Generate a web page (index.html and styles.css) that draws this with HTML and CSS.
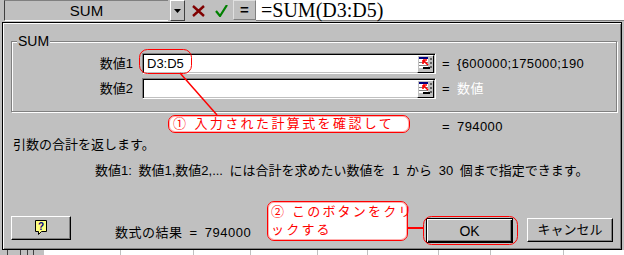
FILE: index.html
```html
<!DOCTYPE html>
<html lang="ja">
<head>
  <meta charset="UTF-8" />
  <title>SUM - 関数の引数</title>
  <link rel="stylesheet" href="styles.css">
</head>
<body>
  <!-- Formula bar -->
  <div class="toolbar">
    <div class="name-box">SUM</div>
    <div class="drop-btn">
      <svg width="7" height="4" viewBox="0 0 7 4"><path d="M0 0h7L3.5 4z" fill="#000"/></svg>
    </div>
    <div class="tool-icon cancel">
      <svg width="13" height="12" viewBox="0 0 13 12"><path d="M1 1l11 10M12 1L1 11" stroke="#800000" stroke-width="2.4"/></svg>
    </div>
    <div class="tool-icon enter">
      <svg width="13" height="12" viewBox="0 0 13 12"><path d="M1 6l4 5L12 0" stroke="#008000" stroke-width="2.2" fill="none"/></svg>
    </div>
    <div class="equal-btn">=</div>
    <div class="formula">=SUM(D3:D5)</div>
  </div>

  <!-- Function arguments dialog -->
  <div class="dialog">
    <div class="group">
      <div class="group-title">SUM</div>
      <div class="arg-grid">
        <label class="arg-label">数値1</label>
        <div class="arg-input">
          <span class="arg-text">D3:D5</span>
          <span class="ref-btn">
            <svg width="15" height="15" viewBox="0 0 15 15">
              <rect x="1" y="1" width="9" height="2" fill="#000080"/>
              <rect x="1" y="3" width="9" height="9" fill="#fff"/>
              <path d="M1 6.5h9M1 9.5h9" stroke="#808080"/>
              <path d="M5 4l5 5M5 4v4M5 4h4" stroke="#f00" stroke-width="1.6" fill="none"/>
              <rect x="5" y="11" width="7" height="2" fill="#000"/>
              <path d="M13 2v2M13 6v2M13 10v2" stroke="#000"/>
            </svg>
          </span>
        </div>
        <div class="arg-value"><span class="eq">=</span>{600000;175000;190</div>

        <label class="arg-label">数値2</label>
        <div class="arg-input">
          <span class="arg-text"></span>
          <span class="ref-btn">
            <svg width="15" height="15" viewBox="0 0 15 15">
              <rect x="1" y="1" width="9" height="2" fill="#000080"/>
              <rect x="1" y="3" width="9" height="9" fill="#fff"/>
              <path d="M1 6.5h9M1 9.5h9" stroke="#808080"/>
              <path d="M5 4l5 5M5 4v4M5 4h4" stroke="#f00" stroke-width="1.6" fill="none"/>
              <rect x="5" y="11" width="7" height="2" fill="#000"/>
              <path d="M13 2v2M13 6v2M13 10v2" stroke="#000"/>
            </svg>
          </span>
        </div>
        <div class="arg-value"><span class="eq">=</span><span class="hint">数値</span></div>
      </div>
    </div>

    <div class="total"><span class="eq">=</span>794000</div>
    <p class="desc">引数の合計を返します。</p>
    <p class="arg-desc">数値1: 数値1,数値2,... には合計を求めたい数値を 1 から 30 個まで指定できます。</p>

    <div class="footer">
      <button class="btn help-btn">
        <svg width="13" height="16" viewBox="0 0 13 16">
          <path d="M0.5 0.5h11v11h-5l-3 3v-3h-3z" fill="#ffff80" stroke="#000"/>
          <text x="6" y="10" font-size="10" font-weight="bold" text-anchor="middle" fill="#000080" font-family="Liberation Sans, sans-serif">?</text>
        </svg>
      </button>
      <span class="result">数式の結果 = 794000</span>
      <button class="btn ok-btn">OK</button>
      <button class="btn cancel-btn">キャンセル</button>
    </div>
  </div>

  <!-- Worksheet peeking out below -->
  <div class="sheet">
    <span class="head"></span><span class="head"></span><span class="head"></span><span class="head"></span><span class="head"></span>
    <span></span><span></span><span></span><span></span><span></span><span></span><span></span><span></span><span></span>
  </div>

  <!-- Annotations drawn over the screenshot -->
  <svg class="marks" width="624" height="255" viewBox="0 0 624 255">
    <rect x="139.5" y="49.5" width="52" height="24" rx="8" fill="none" stroke="#f00"/>
    <path d="M180 73L217 115" stroke="#f00" stroke-width="1.5"/>
    <rect x="423.5" y="216.5" width="94" height="28" rx="8" fill="none" stroke="#f00"/>
    <path d="M407 228h17" stroke="#f00" stroke-width="2"/>
  </svg>
  <div class="callout callout-one">① 入力された計算式を確認して</div>
  <div class="callout callout-two">② このボタンをクリ<br>ックする</div>
</body>
</html>
```

FILE: styles.css
```css
* {
  margin: 0;
  padding: 0;
  box-sizing: border-box;
}

body {
  width: 624px;
  height: 255px;
  overflow: hidden;
  position: relative;
  background: #c0c0c0;
  color: #000;
  font-family: 'Liberation Sans', 'Noto Sans CJK JP', sans-serif;
  font-size: 13px;
  line-height: 16px;
}

/* formula bar */
.toolbar {
  display: flex;
  height: 22px;
  padding-left: 4px;
}

.name-box {
  width: 164px;
  height: 21px;
  border-left: 1px solid #404040;
  border-top: 1px solid #808080;
  border-bottom: 1px solid #fff;
  display: flex;
  align-items: center;
  justify-content: center;
  font-size: 15px;
}

.drop-btn {
  width: 15px;
  height: 21px;
  margin-left: 2px;
  border: 1px solid;
  border-color: #fff #404040 #404040 #fff;
  display: flex;
  align-items: center;
  justify-content: center;
}

.tool-icon {
  width: 23px;
  height: 22px;
  display: flex;
  align-items: center;
  justify-content: center;
}

.tool-icon.cancel {
  margin-left: 2px;
}

.equal-btn {
  width: 23px;
  height: 20px;
  border: 1px solid;
  border-color: #e0e0e0 #808080 #808080 #e0e0e0;
  display: flex;
  align-items: center;
  justify-content: center;
  font-weight: bold;
  font-size: 15px;
}

.formula {
  flex: 1;
  height: 21px;
  background: #fff;
  border-bottom: 1px solid #808080;
  padding-left: 5px;
  font-family: 'Liberation Serif', serif;
  font-size: 20px;
  line-height: 20px;
  white-space: nowrap;
}

/* dialog */
.dialog {
  margin-left: 2px;
  width: 620px;
  height: 228px;
  border: 1px solid #000;
  box-shadow: inset 1px 1px 0 #fff, inset -1px -1px 0 #808080;
}

.group {
  margin: 18px 4px 0 8px;
  border: 1px solid #808080;
  box-shadow: inset 1px 1px 0 #fff, 1px 1px 0 #fff;
  padding-bottom: 12px;
}

.group-title {
  display: table;
  margin: -8px 0 0 5px;
  padding: 0 1px;
  background: #c0c0c0;
  font-size: 14px;
  line-height: 15px;
}

.arg-grid {
  display: grid;
  grid-template-columns: 130px 294px 1fr;
  row-gap: 4px;
  align-items: center;
  margin-top: 4px;
}

.arg-label {
  text-align: right;
  padding-right: 9px;
}

.arg-input {
  height: 21px;
  background: #fff;
  border: 1px solid;
  border-color: #808080 #fff #fff #808080;
  box-shadow: inset 1px 1px 0 #000, inset -1px -1px 0 #c0c0c0;
  display: flex;
  align-items: center;
  padding: 1px 1px 1px 4px;
}

.arg-text {
  flex: 1;
}

.ref-btn {
  width: 17px;
  height: 18px;
  background: #c0c0c0;
  border: 1px solid;
  border-color: #fff #000 #000 #fff;
  display: flex;
  align-items: center;
  justify-content: center;
}

.arg-value {
  padding-left: 6px;
  white-space: nowrap;
  overflow: hidden;
  letter-spacing: 0.4px;
}

.eq {
  display: inline-block;
  width: 15px;
}

.hint {
  color: #fff;
}

.total {
  margin: 7px 0 0 439px;
  letter-spacing: 0.4px;
}

.desc {
  margin: 2px 0 0 10px;
}

.arg-desc {
  margin: 10px 0 0 92px;
  white-space: nowrap;
  word-spacing: 3px;
}

/* buttons row */
.footer {
  display: flex;
  align-items: flex-start;
  margin-top: 37px;
}

.btn {
  height: 24px;
  background: #c0c0c0;
  border: 1px solid;
  border-color: #fff #000 #000 #fff;
  box-shadow: inset -1px -1px 0 #808080;
  font: inherit;
  color: #000;
  display: flex;
  align-items: center;
  justify-content: center;
}

.help-btn {
  width: 60px;
  margin-left: 8px;
}

.result {
  margin: 9px 0 0 44px;
  word-spacing: 3px;
  letter-spacing: 0.5px;
}

.ok-btn {
  width: 87px;
  height: 25px;
  margin: 2px 0 0 auto;
  border-color: #000;
  box-shadow: inset 1px 1px 0 #fff, inset -1px -1px 0 #000, inset -2px -2px 0 #808080;
  font-size: 14px;
}

.cancel-btn {
  width: 86px;
  margin: 2px 8px 0 14px;
}

/* worksheet strip */
.sheet {
  display: grid;
  grid-template-columns: 7px 13px 7px 6px 10px 77px 73px 57px 67px 50px 71px 52px 73px 1fr;
  height: 5px;
}

.sheet span {
  background: #fff;
  border-left: 1px solid #c0c0c0;
}

.sheet .head {
  background: #c0c0c0;
  border-left: 1px solid #404040;
}

.sheet span:first-child {
  border-left: none;
}

/* red annotations */
.marks {
  position: absolute;
  top: 0;
  left: 0;
  pointer-events: none;
}

.callout {
  position: absolute;
  background: #fff;
  border: 1px solid #f00;
  border-radius: 7px;
  box-shadow: inset 0 0 0 1px #ffb0b0;
  color: #f00;
  letter-spacing: 2.4px;
  white-space: nowrap;
}

.callout-one {
  left: 168px;
  top: 115px;
  width: 242px;
  height: 18px;
  padding-left: 4px;
  line-height: 16px;
}

.callout-two {
  left: 267px;
  top: 201px;
  width: 141px;
  height: 40px;
  padding: 1px 0 0 3px;
  line-height: 18px;
  letter-spacing: 2.2px;
}
```
